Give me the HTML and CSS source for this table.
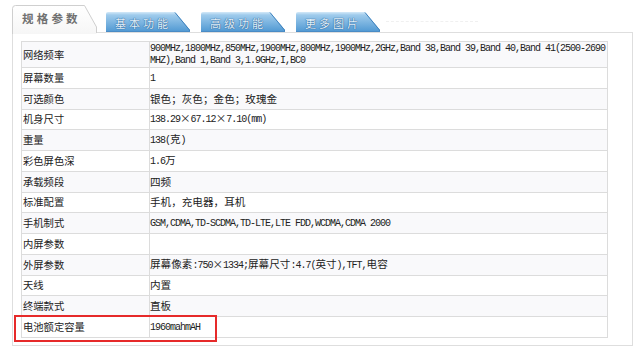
FILE: index.html
```html
<!DOCTYPE html>
<html lang="zh-CN">
<head>
<meta charset="utf-8">
<title>规格参数</title>
<link rel="stylesheet" href="styles.css">
</head>
<body>
<div class="page">
  <div class="tabs">
    <div class="tab tab-active">
      <svg class="tab-bg" width="86" height="29" viewBox="0 0 86 29">
        <defs>
          <linearGradient id="ga" x1="0" y1="0" x2="0" y2="1">
            <stop offset="0" stop-color="#ffffff"/>
            <stop offset="1" stop-color="#f6f6f6"/>
          </linearGradient>
        </defs>
        <path d="M0.5,29 V3.5 Q0.5,0.5 3.5,0.5 H72.5 L84.5,22 V29 Z" fill="url(#ga)"/>
        <path d="M0.5,29 V3.5 Q0.5,0.5 3.5,0.5 H72.5 L84.5,22 V28" fill="none" stroke="#cfcfcf"/>
      </svg>
      <span class="tab-label">规格参数</span>
    </div>
    <div class="tab tab-blue">
      <svg class="tab-bg" width="84" height="20" viewBox="0 0 84 20">
        <defs>
          <linearGradient id="gb" x1="0" y1="0" x2="0" y2="1">
            <stop offset="0" stop-color="#d4e9f8"/>
            <stop offset="0.15" stop-color="#9fcbec"/>
            <stop offset="1" stop-color="#4f98d2"/>
          </linearGradient>
        </defs>
        <path d="M0,20 V2 Q0,0 2,0 H69 L84,18 V20 Z" fill="url(#gb)"/>
        <path d="M69,0.5 L83.5,18 V20" fill="none" stroke="#3f82bd"/>
        <path d="M0,19.5 H84" stroke="#4a8cc6"/>
      </svg>
      <span class="tab-label">基本功能</span>
    </div>
    <div class="tab tab-blue">
      <svg class="tab-bg" width="84" height="20" viewBox="0 0 84 20">
        <path d="M0,20 V2 Q0,0 2,0 H69 L84,18 V20 Z" fill="url(#gb)"/>
        <path d="M69,0.5 L83.5,18 V20" fill="none" stroke="#3f82bd"/>
        <path d="M0,19.5 H84" stroke="#4a8cc6"/>
      </svg>
      <span class="tab-label">高级功能</span>
    </div>
    <div class="tab tab-blue">
      <svg class="tab-bg" width="84" height="20" viewBox="0 0 84 20">
        <path d="M0,20 V2 Q0,0 2,0 H69 L84,18 V20 Z" fill="url(#gb)"/>
        <path d="M69,0.5 L83.5,18 V20" fill="none" stroke="#3f82bd"/>
        <path d="M0,19.5 H84" stroke="#4a8cc6"/>
      </svg>
      <span class="tab-label">更多图片</span>
    </div>
    <div class="tab-rest"></div>
  </div>

  <div class="box">
    <table class="spec">
      <tr class="tall">
        <td class="k">网络频率</td>
        <td class="v"><span class="en wrap">900MHz,1800MHz,850MHz,1900MHz,800MHz,1900MHz,2GHz,Band 38,Band 39,Band 40,Band 41(2500-2690MHZ),Band 1,Band 3,1.9GHz,I,BC0</span></td>
      </tr>
      <tr><td class="k">屏幕数量</td><td class="v"><span class="en">1</span></td></tr>
      <tr><td class="k">可选颜色</td><td class="v">银色；灰色；金色；玫瑰金</td></tr>
      <tr><td class="k">机身尺寸</td><td class="v"><span class="en">138.29</span>×<span class="en">67.12</span>×<span class="en">7.10(mm)</span></td></tr>
      <tr><td class="k">重量</td><td class="v"><span class="en">138(</span>克<span class="en">)</span></td></tr>
      <tr><td class="k">彩色屏色深</td><td class="v"><span class="en">1.6</span>万</td></tr>
      <tr><td class="k">承载频段</td><td class="v">四频</td></tr>
      <tr><td class="k">标准配置</td><td class="v">手机，充电器，耳机</td></tr>
      <tr><td class="k">手机制式</td><td class="v"><span class="en">GSM,CDMA,TD-SCDMA,TD-LTE,LTE FDD,WCDMA,CDMA 2000</span></td></tr>
      <tr><td class="k">内屏参数</td><td class="v"></td></tr>
      <tr><td class="k">外屏参数</td><td class="v">屏幕像素<span class="en">:750</span>×<span class="en">1334;</span>屏幕尺寸<span class="en">:4.7(</span>英寸<span class="en">),TFT,</span>电容</td></tr>
      <tr><td class="k">天线</td><td class="v">内置</td></tr>
      <tr><td class="k">终端款式</td><td class="v">直板</td></tr>
      <tr><td class="k">电池额定容量</td><td class="v"><span class="en">1960mahmAH</span></td></tr>
    </table>
    <div class="highlight"></div>
  </div>
</div>
</body>
</html>
```

FILE: styles.css
```css
html, body {
  margin: 0;
  padding: 0;
  background: #ffffff;
}

body {
  font-family: "Noto Sans CJK SC", "Liberation Sans", sans-serif;
  color: #222;
}

.page {
  margin: 5px 0 0 12px;
  width: 621px;
}

.tabs {
  display: flex;
  align-items: flex-end;
  height: 27px;
  position: relative;
  z-index: 2;
}

.tab {
  position: relative;
  display: flex;
  align-items: center;
  flex: none;
}

.tab-bg {
  position: absolute;
  left: 0;
  top: 0;
  display: block;
}

.tab-label {
  position: relative;
  white-space: nowrap;
}

.tab-active {
  width: 86px;
  height: 29px;
  margin-bottom: -2px;
  align-items: flex-start;
}

.tab-active .tab-label {
  margin: 5px 0 0 10px;
  font-size: 11.5px;
  line-height: 16px;
  font-weight: bold;
  letter-spacing: 3.2px;
  color: #707070;
}

.tab-blue {
  width: 84px;
  height: 20px;
  margin-left: 11px;
}

.tab-active + .tab-blue {
  margin-left: 8px;
}

.tab-blue .tab-label {
  margin-left: 9px;
  margin-top: 1px;
  font-size: 11px;
  line-height: 14px;
  letter-spacing: 3px;
  color: #e3f1fb;
  text-shadow: 0 0 1px #245a8e, 0 0 1px #245a8e;
}

.tab-rest {
  align-self: center;
  margin: 5px 0 0 6px;
  width: 92px;
  border-top: 1px dashed #f0f0f0;
}

.box {
  position: relative;
  box-sizing: border-box;
  width: 621px;
  height: 314px;
  border: 1px solid #dedede;
  padding: 8px 0 0 8px;
}

.spec {
  width: 587px;
  border-collapse: collapse;
  table-layout: fixed;
  border: 1px solid #d9d9d9;
}

.spec tr {
  height: 20.75px;
}

.spec tr:nth-child(odd) {
  background: #f9f9fb;
}

.spec tr.tall {
  height: 26px;
}

.spec td {
  border: 1px solid #dcdcdc;
  padding: 0 0 0 1px;
  vertical-align: middle;
  color: #222;
}

.spec td.k {
  width: 126px;
  font-size: 10.3px;
  line-height: 14px;
}

.spec td.v {
  padding-left: 0;
  font-size: 10.6px;
  line-height: 14px;
}

.en {
  font-family: "Liberation Mono", "DejaVu Sans Mono", monospace;
  font-size: 10px;
  letter-spacing: -1px;
}

.en.wrap {
  display: block;
  line-height: 12px;
  word-break: break-all;
}

.highlight {
  position: absolute;
  left: 1px;
  top: 282px;
  width: 203px;
  height: 27px;
  box-sizing: border-box;
  border: 2px solid #e62a2a;
  pointer-events: none;
}
```
